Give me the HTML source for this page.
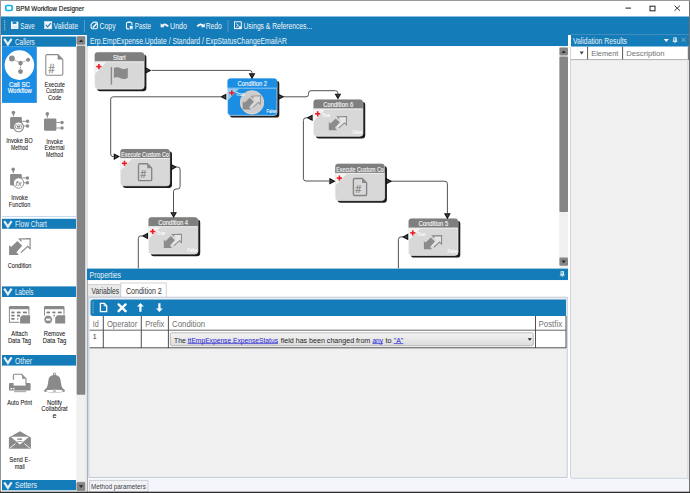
<!DOCTYPE html>
<html><head><meta charset="utf-8">
<style>
*{margin:0;padding:0}
html,body{width:690px;height:493px;overflow:hidden;background:#fff}
svg{position:absolute;left:0;top:0;display:block}
text{font-family:"Liberation Sans",sans-serif;white-space:pre}
</style></head><body>
<svg width="690" height="493" viewBox="0 0 690 493">
<rect x="0" y="0" width="690" height="493" fill="#ffffff" />
<rect x="0" y="0" width="690" height="1" fill="#8a8a8a" />
<rect x="5.75" y="5.5" width="6.5" height="5" rx="1.5" fill="none" stroke="#0cb4ee" stroke-width="1.7"/>
<text x="16" y="10.9" font-size="7.2" fill="#111111" text-anchor="start" font-weight="normal" textLength="68" lengthAdjust="spacingAndGlyphs"  stroke="#111111" stroke-width="0.14">BPM Workflow Designer</text>
<rect x="625.5" y="7.6" width="5.5" height="1" fill="#222" />
<rect x="650" y="6.2" width="5" height="4.6" fill="none" stroke="#222" stroke-width="1"/>
<path d="M674.5 5.6 L680 10.8 M680 5.6 L674.5 10.8" fill="none" stroke="#222" stroke-width="0.9" />
<rect x="1" y="16.5" width="688" height="18.5" fill="#147cb8" />
<rect x="4.2" y="20.2" width="1" height="1" fill="#bcd3e6" />
<rect x="4.2" y="22.0" width="1" height="1" fill="#bcd3e6" />
<rect x="4.2" y="23.8" width="1" height="1" fill="#bcd3e6" />
<rect x="4.2" y="25.6" width="1" height="1" fill="#bcd3e6" />
<rect x="4.2" y="27.4" width="1" height="1" fill="#bcd3e6" />
<rect x="4.2" y="29.2" width="1" height="1" fill="#bcd3e6" />
<rect x="11" y="21.6" width="7.4" height="7.4" fill="#f2f6fa" />
<rect x="12.7" y="21.6" width="3.7" height="2.3" fill="#147cb8" />
<rect x="12.4" y="25.6" width="4.6" height="2.8" fill="#dbe6ef" />
<text x="20.3" y="28.8" font-size="8.4" fill="#f2f6fa" text-anchor="start" font-weight="normal" textLength="14.5" lengthAdjust="spacingAndGlyphs" >Save</text>
<rect x="44.4" y="21.4" width="7.4" height="7.4" fill="#f2f6fa" stroke="#d6e3ee" stroke-width="0.6"/>
<path d="M45.7 24.9 l1.9 2 l3.2 -3.8" fill="none" stroke="#147cb8" stroke-width="1.1" />
<text x="53.6" y="28.8" font-size="8.4" fill="#f2f6fa" text-anchor="start" font-weight="normal" textLength="24.4" lengthAdjust="spacingAndGlyphs" >Validate</text>
<rect x="84" y="20" width="0.9" height="12" fill="#5f9ccb" />
<path d="M93.4 22.1 H96.2 a1.2 1.2 0 0 1 1.2 1.2 V27.6 a1.2 1.2 0 0 1 -1.2 1.2 H92.3 a1.2 1.2 0 0 1 -1.2 -1.2 V24.4 z" fill="none" stroke="#f2f6fa" stroke-width="1.1" />
<path d="M93 27.6 L96.6 23.6" fill="none" stroke="#f2f6fa" stroke-width="1.5" />
<path d="M92.4 28.2 L93.4 26.6 L94 27.4 z" fill="#f2f6fa" stroke="none" stroke-width="1" />
<text x="99.5" y="28.8" font-size="8.4" fill="#f2f6fa" text-anchor="start" font-weight="normal" textLength="16.1" lengthAdjust="spacingAndGlyphs" >Copy</text>
<rect x="126.5" y="22.3" width="5.4" height="6.6" rx="1" fill="none" stroke="#f2f6fa" stroke-width="1.1"/>
<rect x="127.6" y="21.6" width="3.2" height="1.2" fill="#f2f6fa" />
<rect x="129.3" y="25.4" width="3.8" height="3.8" fill="#f2f6fa" stroke="#147cb8" stroke-width="0.7"/>
<text x="134.8" y="28.8" font-size="8.4" fill="#f2f6fa" text-anchor="start" font-weight="normal" textLength="16.2" lengthAdjust="spacingAndGlyphs" >Paste</text>
<path d="M162 25.8 q2.8 -3 6.2 0.6" fill="none" stroke="#f2f6fa" stroke-width="1.9" />
<path d="M160.6 23.2 v4 h4 z" fill="#f2f6fa" stroke="none" stroke-width="1" />
<text x="170" y="28.8" font-size="8.4" fill="#f2f6fa" text-anchor="start" font-weight="normal" textLength="17" lengthAdjust="spacingAndGlyphs" >Undo</text>
<path d="M203.4 25.8 q-2.8 -3 -6.2 0.6" fill="none" stroke="#f2f6fa" stroke-width="1.9" />
<path d="M204.8 23.2 v4 h-4 z" fill="#f2f6fa" stroke="none" stroke-width="1" />
<text x="205.7" y="28.8" font-size="8.4" fill="#f2f6fa" text-anchor="start" font-weight="normal" textLength="16" lengthAdjust="spacingAndGlyphs" >Redo</text>
<rect x="227.6" y="20" width="0.9" height="12" fill="#5f9ccb" />
<rect x="234.5" y="21.8" width="6.8" height="6.8" fill="none" stroke="#f2f6fa" stroke-width="1"/>
<path d="M236.3 23.8 l2.2 1.6 l-2.2 1.6" fill="none" stroke="#f2f6fa" stroke-width="1" />
<rect x="238.8" y="26.4" width="2.4" height="2.2" fill="#f2f6fa" />
<text x="243.5" y="28.8" font-size="8.4" fill="#f2f6fa" text-anchor="start" font-weight="normal" textLength="68.5" lengthAdjust="spacingAndGlyphs" >Usings &amp; References...</text>
<rect x="1" y="35" width="86" height="457" fill="#ffffff" />
<rect x="76.3" y="36" width="9.2" height="455.5" fill="#f0f0f0" />
<rect x="76.8" y="36.6" width="8.6" height="8" rx="1" fill="#858585" stroke="#7a7a7a" stroke-width="0.5"/>
<path d="M78.9 42 L81.1 39.5 L83.3 42 z" fill="#2a2a2a" stroke="none" stroke-width="1" />
<rect x="76.7" y="45.8" width="8.6" height="349" rx="1" fill="#858585"/>
<rect x="84.5" y="46.5" width="0.8" height="347.6" fill="#7a7a7a" />
<rect x="76.8" y="482.2" width="8.6" height="8.5" rx="1" fill="#858585" stroke="#7a7a7a" stroke-width="0.5"/>
<path d="M78.9 485.2 L81.1 487.9 L83.3 485.2 z" fill="#2a2a2a" stroke="none" stroke-width="1" />
<rect x="85.3" y="35" width="2.7" height="457" fill="#e2e5e9" />
<rect x="2" y="36.5" width="74" height="10.200000000000003" fill="#147cb8" />
<path d="M4.2 38.8 L7.9 44.4 L11.6 38.8" fill="none" stroke="#e4eef6" stroke-width="2.2" />
<text x="15" y="44.6" font-size="8.7" fill="#eaf2f8" text-anchor="start" font-weight="normal" textLength="19.8" lengthAdjust="spacingAndGlyphs" >Callers</text>
<rect x="2" y="218.8" width="74" height="10.0" fill="#147cb8" />
<path d="M4.2 221.10000000000002 L7.9 226.70000000000002 L11.6 221.10000000000002" fill="none" stroke="#e4eef6" stroke-width="2.2" />
<text x="15" y="226.70000000000002" font-size="8.7" fill="#eaf2f8" text-anchor="start" font-weight="normal" textLength="31.9" lengthAdjust="spacingAndGlyphs" >Flow Chart</text>
<rect x="2" y="216" width="74" height="0.8" fill="#b9d3ea" />
<rect x="2" y="286.4" width="74" height="10.600000000000023" fill="#147cb8" />
<path d="M4.2 288.7 L7.9 294.29999999999995 L11.6 288.7" fill="none" stroke="#e4eef6" stroke-width="2.2" />
<text x="15" y="294.9" font-size="8.7" fill="#eaf2f8" text-anchor="start" font-weight="normal" textLength="18.4" lengthAdjust="spacingAndGlyphs" >Labels</text>
<rect x="2" y="355" width="74" height="10.600000000000023" fill="#147cb8" />
<path d="M4.2 357.3 L7.9 362.9 L11.6 357.3" fill="none" stroke="#e4eef6" stroke-width="2.2" />
<text x="15" y="363.5" font-size="8.7" fill="#eaf2f8" text-anchor="start" font-weight="normal" textLength="17" lengthAdjust="spacingAndGlyphs" >Other</text>
<rect x="2" y="480" width="74" height="10.300000000000011" fill="#147cb8" />
<path d="M4.2 482.3 L7.9 487.9 L11.6 482.3" fill="none" stroke="#e4eef6" stroke-width="2.2" />
<text x="15" y="488.2" font-size="8.7" fill="#eaf2f8" text-anchor="start" font-weight="normal" textLength="22" lengthAdjust="spacingAndGlyphs" >Setters</text>
<rect x="2" y="46.7" width="34.8" height="56.2" fill="#1b8de2" />
<circle cx="19.4" cy="65.1" r="14.8" fill="#ffffff" stroke="none" stroke-width="1"/>
<path d="M11.9 58.5 L20.5 63.1 L28.1 59.8 M20.5 63.1 L20.5 71.6" fill="none" stroke="#8a8a8a" stroke-width="0.9" stroke-dasharray="1.2 0.8"/>
<circle cx="11.9" cy="58.5" r="2.9" fill="#8a8a8a" stroke="none" stroke-width="1"/>
<circle cx="28.1" cy="59.8" r="2" fill="#8a8a8a" stroke="none" stroke-width="1"/>
<circle cx="20.5" cy="63.1" r="2.3" fill="#8a8a8a" stroke="none" stroke-width="1"/>
<circle cx="20.5" cy="71.6" r="2.4" fill="#8a8a8a" stroke="none" stroke-width="1"/>
<text x="19.5" y="86.6" font-size="7.0" fill="#ffffff" text-anchor="middle" font-weight="normal" textLength="21" lengthAdjust="spacingAndGlyphs"  stroke="#ffffff" stroke-width="0.15">Call SC</text>
<text x="19.7" y="92.9" font-size="7.0" fill="#ffffff" text-anchor="middle" font-weight="normal" textLength="24" lengthAdjust="spacingAndGlyphs"  stroke="#ffffff" stroke-width="0.15">Workflow</text>
<path d="M47 54.6 h11 l4.8 4.8 v14.6 a1.2 1.2 0 0 1 -1.2 1.2 h-14.6 a1.2 1.2 0 0 1 -1.2 -1.2 v-18.2 a1.2 1.2 0 0 1 1.2 -1.2 z" fill="none" stroke="#8a8a8a" stroke-width="1.1" />
<path d="M57.6 54.6 v4.8 h5.2 z" fill="#8a8a8a" stroke="none" stroke-width="1" />
<text x="51.6" y="72.6" font-size="13.2" fill="#8a8a8a" text-anchor="middle" font-weight="normal" textLength="6" lengthAdjust="spacingAndGlyphs"  stroke="#8a8a8a" stroke-width="0.3">#</text>
<text x="54.7" y="86.5" font-size="7.2" fill="#111111" text-anchor="middle" font-weight="normal" textLength="20.5" lengthAdjust="spacingAndGlyphs"  stroke="#111111" stroke-width="0.06">Execute</text>
<text x="54.7" y="93.0" font-size="7.2" fill="#111111" text-anchor="middle" font-weight="normal" textLength="17.5" lengthAdjust="spacingAndGlyphs"  stroke="#111111" stroke-width="0.06">Custom</text>
<text x="54.7" y="99.5" font-size="7.2" fill="#111111" text-anchor="middle" font-weight="normal" textLength="13.5" lengthAdjust="spacingAndGlyphs"  stroke="#111111" stroke-width="0.06">Code</text>
<circle cx="13.4" cy="112.5" r="1.8" fill="#8a8a8a" stroke="none" stroke-width="1"/>
<path d="M12.3 113.5 L13.4 117.1 L14.5 113.5 z" fill="#8a8a8a" stroke="none" stroke-width="1" />
<rect x="10.1" y="117.1" width="11.8" height="11.8" rx="1.3" fill="#8a8a8a"/>
<line x1="21.9" y1="121.3" x2="26.099999999999998" y2="121.3" stroke="#8a8a8a" stroke-width="0.9" />
<circle cx="27.5" cy="121.3" r="1.75" fill="#8a8a8a" stroke="none" stroke-width="1"/>
<line x1="21.9" y1="126" x2="26.099999999999998" y2="126" stroke="#8a8a8a" stroke-width="0.9" />
<circle cx="27.5" cy="126" r="1.75" fill="#8a8a8a" stroke="none" stroke-width="1"/>
<circle cx="18.6" cy="126.8" r="4.9" fill="#ffffff" stroke="#8a8a8a" stroke-width="1.1"/>
<rect x="15.6" y="125" width="6" height="3.6" rx="0.8" fill="#ffffff" stroke="#8a8a8a" stroke-width="0.8"/>
<rect x="17" y="126.3" width="3.2" height="1.1" fill="#555" />
<text x="19.4" y="143.2" font-size="7.2" fill="#111111" text-anchor="middle" font-weight="normal" textLength="26.5" lengthAdjust="spacingAndGlyphs"  stroke="#111111" stroke-width="0.06">Invoke BO</text>
<text x="19.4" y="149.7" font-size="7.2" fill="#111111" text-anchor="middle" font-weight="normal" textLength="17" lengthAdjust="spacingAndGlyphs"  stroke="#111111" stroke-width="0.06">Method</text>
<circle cx="47.3" cy="113.80000000000001" r="1.8" fill="#8a8a8a" stroke="none" stroke-width="1"/>
<path d="M46.199999999999996 114.80000000000001 L47.3 118.4 L48.4 114.80000000000001 z" fill="#8a8a8a" stroke="none" stroke-width="1" />
<rect x="44" y="118.4" width="12.4" height="12.4" rx="1.3" fill="#8a8a8a"/>
<line x1="56.4" y1="122.5" x2="60.6" y2="122.5" stroke="#8a8a8a" stroke-width="0.9" />
<circle cx="62.0" cy="122.5" r="1.75" fill="#8a8a8a" stroke="none" stroke-width="1"/>
<line x1="56.4" y1="128" x2="60.6" y2="128" stroke="#8a8a8a" stroke-width="0.9" />
<circle cx="62.0" cy="128" r="1.75" fill="#8a8a8a" stroke="none" stroke-width="1"/>
<text x="54.5" y="143.7" font-size="7.2" fill="#111111" text-anchor="middle" font-weight="normal" textLength="16.5" lengthAdjust="spacingAndGlyphs"  stroke="#111111" stroke-width="0.06">Invoke</text>
<text x="54.5" y="150.2" font-size="7.2" fill="#111111" text-anchor="middle" font-weight="normal" textLength="20" lengthAdjust="spacingAndGlyphs"  stroke="#111111" stroke-width="0.06">External</text>
<text x="54.5" y="156.7" font-size="7.2" fill="#111111" text-anchor="middle" font-weight="normal" textLength="17" lengthAdjust="spacingAndGlyphs"  stroke="#111111" stroke-width="0.06">Method</text>
<circle cx="13.2" cy="169.3" r="1.8" fill="#8a8a8a" stroke="none" stroke-width="1"/>
<path d="M12.1 170.3 L13.2 173.9 L14.299999999999999 170.3 z" fill="#8a8a8a" stroke="none" stroke-width="1" />
<rect x="10.1" y="173.9" width="11.7" height="11.7" rx="1.3" fill="#8a8a8a"/>
<line x1="21.799999999999997" y1="177.9" x2="25.999999999999996" y2="177.9" stroke="#8a8a8a" stroke-width="0.9" />
<circle cx="27.4" cy="177.9" r="1.75" fill="#8a8a8a" stroke="none" stroke-width="1"/>
<line x1="21.799999999999997" y1="182.8" x2="25.999999999999996" y2="182.8" stroke="#8a8a8a" stroke-width="0.9" />
<circle cx="27.4" cy="182.8" r="1.75" fill="#8a8a8a" stroke="none" stroke-width="1"/>
<circle cx="18.6" cy="183" r="5.2" fill="#ffffff" stroke="#8a8a8a" stroke-width="0.9"/>
<text x="18.8" y="185.6" font-size="7.8" fill="#777" text-anchor="middle" font-weight="normal" textLength="6.4" lengthAdjust="spacingAndGlyphs" font-style="italic">fx</text>
<text x="19.5" y="200.2" font-size="7.2" fill="#111111" text-anchor="middle" font-weight="normal" textLength="16.5" lengthAdjust="spacingAndGlyphs"  stroke="#111111" stroke-width="0.06">Invoke</text>
<text x="19.5" y="206.7" font-size="7.2" fill="#111111" text-anchor="middle" font-weight="normal" textLength="21.5" lengthAdjust="spacingAndGlyphs"  stroke="#111111" stroke-width="0.06">Function</text>
<g transform="translate(9.1,238) scale(1.0)"><path d="M12.4 3.2 L10.4 0.8 L21 0.8 L21 10.4 L18.6 8.4 L11.8 14.6 L9.0 12.4 L14.6 6.8 Z" fill="#ffffff"/><path d="M0 17 L0 7.1 L1.9 9 L8.3 3 L13.1 7.8 L7.3 14.2 L9.8 17 Z" fill="#8a8a8a"/><path d="M12.4 3.4 L10.2 1.0 L21.1 0.7 L21 10.6 L18.6 8.4 L11.8 14.6" fill="none" stroke="#8a8a8a" stroke-width="1.15"/></g>
<text x="19.6" y="267.5" font-size="7.2" fill="#111111" text-anchor="middle" font-weight="normal" textLength="23.7" lengthAdjust="spacingAndGlyphs"  stroke="#111111" stroke-width="0.06">Condition</text>
<path d="M8.9 309.3 V307.3 a1.3 1.3 0 0 1 1.3 -1.3 H28.1 a1.3 1.3 0 0 1 1.3 1.3 V309.3 z" fill="#8a8a8a" stroke="none" stroke-width="1" />
<line x1="28.9" y1="309" x2="28.9" y2="314.5" stroke="#8a8a8a" stroke-width="1" />
<line x1="9.4" y1="309" x2="9.4" y2="322.3" stroke="#8a8a8a" stroke-width="1" />
<line x1="8.9" y1="322.3" x2="19.5" y2="322.3" stroke="#8a8a8a" stroke-width="1" />
<rect x="11.3" y="311.6" width="3.1999999999999997" height="1.7" fill="#7a7a7a" />
<rect x="16.9" y="311.6" width="3.6999999999999993" height="1.7" fill="#7a7a7a" />
<rect x="23.0" y="311.6" width="3.799999999999999" height="1.7" fill="#7a7a7a" />
<rect x="11.3" y="314.8" width="3.1999999999999997" height="1.7" fill="#7a7a7a" />
<rect x="17.0" y="314.8" width="3.0" height="1.7" fill="#7a7a7a" />
<rect x="11.3" y="318.0" width="3.1999999999999997" height="1.7" fill="#7a7a7a" />
<rect x="17.200000000000003" y="318.0" width="1.0" height="1.7" fill="#7a7a7a" />
<path d="M22.3 315.2 H30.1 V323.6 H20.1 V317.4 z" fill="#8a8a8a" stroke="none" stroke-width="1" />
<text x="19.5" y="336.2" font-size="7.2" fill="#111111" text-anchor="middle" font-weight="normal" textLength="16.3" lengthAdjust="spacingAndGlyphs"  stroke="#111111" stroke-width="0.06">Attach</text>
<text x="19.5" y="342.7" font-size="7.2" fill="#111111" text-anchor="middle" font-weight="normal" textLength="23.2" lengthAdjust="spacingAndGlyphs"  stroke="#111111" stroke-width="0.06">Data Tag</text>
<path d="M44 309.3 V307.3 a1.3 1.3 0 0 1 1.3 -1.3 H63.2 a1.3 1.3 0 0 1 1.3 1.3 V309.3 z" fill="#8a8a8a" stroke="none" stroke-width="1" />
<line x1="64" y1="309" x2="64" y2="314.5" stroke="#8a8a8a" stroke-width="1" />
<line x1="44.5" y1="309" x2="44.5" y2="315.5" stroke="#8a8a8a" stroke-width="1" />
<rect x="46.6" y="311.6" width="3.4" height="1.7" fill="#7a7a7a" />
<rect x="52.4" y="311.6" width="3.0" height="1.7" fill="#7a7a7a" />
<rect x="57.8" y="311.6" width="3.8999999999999986" height="1.7" fill="#7a7a7a" />
<rect x="53.5" y="314.8" width="1.3000000000000007" height="1.7" fill="#7a7a7a" />
<path d="M57.4 315.2 H65.2 V323.6 H55.2 V317.4 z" fill="#8a8a8a" stroke="none" stroke-width="1" />
<circle cx="48.2" cy="319.6" r="4.3" fill="#8a8a8a" stroke="#ffffff" stroke-width="0.8"/>
<rect x="46.1" y="318.6" width="4.4" height="2" fill="#ffffff" />
<text x="54.5" y="336.2" font-size="7.2" fill="#111111" text-anchor="middle" font-weight="normal" textLength="21.6" lengthAdjust="spacingAndGlyphs"  stroke="#111111" stroke-width="0.06">Remove</text>
<text x="54.5" y="342.7" font-size="7.2" fill="#111111" text-anchor="middle" font-weight="normal" textLength="23.4" lengthAdjust="spacingAndGlyphs"  stroke="#111111" stroke-width="0.06">Data Tag</text>
<rect x="9" y="383" width="21.6" height="7.6" rx="1.2" fill="#8a8a8a"/>
<rect x="13.6" y="376" width="12" height="9.6" fill="#ffffff" />
<path d="M13.4 379.8 V375.6 a1.3 1.3 0 0 1 1.3 -1.3 H21.6 L26 378.7 V384" fill="none" stroke="#8a8a8a" stroke-width="1.1" />
<path d="M21.6 375 L25.4 378.8 L22.6 379 z" fill="#8a8a8a" stroke="none" stroke-width="1" />
<rect x="10.5" y="388" width="1.6" height="1.3" fill="#ffffff" />
<rect x="12.9" y="388" width="1.6" height="1.3" fill="#ffffff" />
<rect x="14" y="390.6" width="12.2" height="1.6" fill="#b0b0b0" />
<text x="19.6" y="404.7" font-size="7.2" fill="#111111" text-anchor="middle" font-weight="normal" textLength="24.9" lengthAdjust="spacingAndGlyphs"  stroke="#111111" stroke-width="0.06">Auto Print</text>
<circle cx="54.5" cy="374" r="1.1" fill="#ffffff" stroke="#8a8a8a" stroke-width="0.9"/>
<path d="M54.5 375.1 C50.5 375.1 48.8 377.5 48.4 380.5 C47.8 385 47.4 387.5 45.5 389 C44.5 389.8 44 390.3 44 391 C44 393 65 393 65 391 C65 390.3 64.5 389.8 63.5 389 C61.6 387.5 61.2 385 60.6 380.5 C60.2 377.5 58.5 375.1 54.5 375.1 Z" fill="#8a8a8a" stroke="none" stroke-width="1" />
<ellipse cx="54.5" cy="391" rx="8.8" ry="1.25" fill="#ffffff"/>
<rect x="53.3" y="390.6" width="2.4" height="0.9" fill="#666" />
<text x="54.5" y="405.0" font-size="7.2" fill="#111111" text-anchor="middle" font-weight="normal" textLength="15" lengthAdjust="spacingAndGlyphs"  stroke="#111111" stroke-width="0.06">Notify</text>
<text x="54.5" y="411.3" font-size="7.2" fill="#111111" text-anchor="middle" font-weight="normal" textLength="26.3" lengthAdjust="spacingAndGlyphs"  stroke="#111111" stroke-width="0.06">Collaborat</text>
<text x="54.5" y="417.6" font-size="7.2" fill="#111111" text-anchor="middle" font-weight="normal"  stroke="#111111" stroke-width="0.06">e</text>
<path d="M8.9 437.6 L19.9 431.2 L30.9 437.6 V448.8 H8.9 z" fill="#8a8a8a" stroke="none" stroke-width="1" />
<path d="M11.6 436.7 H28.2 V437.6 L19.9 444.4 L11.6 437.6 z" fill="#ffffff" stroke="none" stroke-width="1" />
<rect x="17.3" y="438.4" width="4.8" height="1.5" fill="#8a8a8a" />
<rect x="17.3" y="441.2" width="4.8" height="0.8" fill="#8a8a8a" />
<path d="M9.8 448.3 L15.4 443.6 M30 448.3 L24.4 443.6" fill="none" stroke="#ffffff" stroke-width="0.9" />
<text x="19.8" y="462.0" font-size="7.2" fill="#111111" text-anchor="middle" font-weight="normal" textLength="21.1" lengthAdjust="spacingAndGlyphs"  stroke="#111111" stroke-width="0.06">Send E-</text>
<text x="19.8" y="468.5" font-size="7.2" fill="#111111" text-anchor="middle" font-weight="normal" textLength="10.1" lengthAdjust="spacingAndGlyphs"  stroke="#111111" stroke-width="0.06">mail</text>
<rect x="87" y="35" width="481" height="11.2" fill="#147cb8" />
<text x="90" y="43.9" font-size="8.4" fill="#eaf2f8" text-anchor="start" font-weight="normal" textLength="197" lengthAdjust="spacingAndGlyphs" >Erp.EmpExpense.Update / Standard / ExpStatusChangeEmailAR</text>
<rect x="88" y="46.2" width="480" height="222.4" fill="#ffffff" />
<rect x="559.2" y="46.2" width="9" height="222.4" fill="#f0f0f0" />
<rect x="559.4" y="47.4" width="8.6" height="8" rx="1" fill="#858585"/>
<path d="M561.5 53 L563.7 50.4 L565.9 53 z" fill="#2a2a2a" stroke="none" stroke-width="1" />
<rect x="559.4" y="56.4" width="8.6" height="155.6" rx="1" fill="#858585"/>
<rect x="559.4" y="257.6" width="8.6" height="8.2" rx="1" fill="#858585"/>
<path d="M561.5 260.6 L563.7 263.2 L565.9 260.6 z" fill="#2a2a2a" stroke="none" stroke-width="1" />
<path d="M151.6 70.4 H249.6 q2.4 0 2.4 2.4 V73.5" fill="none" stroke="#4a4a4a" stroke-width="0.95" stroke-linejoin="round"/>
<path d="M283.6 96.8 H306 q2.5 0 2.5 -2.5 V93.2 q0 -2.5 2.5 -2.5 H335.4 q2.5 0 2.5 2.5 V94" fill="none" stroke="#4a4a4a" stroke-width="0.95" stroke-linejoin="round"/>
<path d="M220.6 96.8 H113.2 q-2.5 0 -2.5 2.5 V154.1 q0 2.5 2.5 2.5 H114" fill="none" stroke="#4a4a4a" stroke-width="0.95" stroke-linejoin="round"/>
<path d="M176.4 167 H177.6 q2.5 0 2.5 2.5 V186.5 q0 2.5 -2.5 2.5 H176 q-2.5 0 -2.5 2.5 V212.4" fill="none" stroke="#4a4a4a" stroke-width="0.95" stroke-linejoin="round"/>
<path d="M142.6 235.9 H140.8 q-2.5 0 -2.5 2.5 V268.5" fill="none" stroke="#4a4a4a" stroke-width="0.95" stroke-linejoin="round"/>
<path d="M307.2 117.8 H306 q-2.6 0 -2.6 2.6 V178.5 q0 2.5 2.5 2.5 H329.4" fill="none" stroke="#4a4a4a" stroke-width="0.95" stroke-linejoin="round"/>
<path d="M391 181.2 H444.8 q2.6 0 2.6 2.6 V213.4" fill="none" stroke="#4a4a4a" stroke-width="0.95" stroke-linejoin="round"/>
<path d="M402.8 236.9 H401 q-2.6 0 -2.6 2.6 V268.5" fill="none" stroke="#4a4a4a" stroke-width="0.95" stroke-linejoin="round"/>
<rect x="97.0" y="54.5" width="49.4" height="36.8" rx="3.2" fill="#1a1a1a" filter="url(#blur)"/>
<rect x="94.7" y="52.3" width="49.4" height="36.8" rx="3" fill="#d8d8d8" stroke="#f2f2f2" stroke-width="0.7"/>
<path d="M94.7 61.4 V55.3 a3 3 0 0 1 3 -3 H141.1 a3 3 0 0 1 3 3 V61.4 z" fill="#7f7f7f"/>
<rect x="95.10000000000001" y="61.4" width="48.6" height="0.9" fill="#f0f0f0" />
<text x="119.4" y="60.0" font-size="7.4" fill="#fafafa" text-anchor="middle" font-weight="normal" textLength="12.8" lengthAdjust="spacingAndGlyphs"  stroke="#fafafa" stroke-width="0.12">Start</text>
<path d="M95.10000000000001 62.3 H106.3 L95.10000000000001 73.9 z" fill="#f4f4f4" stroke="none" stroke-width="1" />
<rect x="96.3" y="65.8" width="5.2" height="1.6" fill="#ee1c24" />
<rect x="98.10000000000001" y="64.0" width="1.6" height="5.2" fill="#ee1c24" />
<rect x="110.7" y="67.0" width="1.4" height="17.6" fill="#8a8a8a" />
<path d="M113.9 67.8 C117.0 66.5 119.5 67.5 121.5 68.6 C123.5 69.6 126.0 69.0 127.80000000000001 67.8 V77.8 C126.0 79.0 123.5 79.6 121.5 78.6 C119.5 77.5 117.0 76.5 113.9 77.8 Z" fill="#8a8a8a" stroke="none" stroke-width="1" />
<rect x="229.9" y="80.8" width="49.4" height="36.8" rx="3.2" fill="#1a1a1a" filter="url(#blur)"/>
<rect x="227.6" y="78.6" width="49.4" height="36.8" rx="3" fill="#1b8de2" stroke="#cfe6f8" stroke-width="0.7"/>
<path d="M227.6 87.69999999999999 V81.6 a3 3 0 0 1 3 -3 H274.0 a3 3 0 0 1 3 3 V87.69999999999999 z" fill="#1b8de2"/>
<rect x="228.0" y="87.69999999999999" width="48.6" height="0.9" fill="#9fd0f4" />
<text x="252.29999999999998" y="86.3" font-size="7.4" fill="#fafafa" text-anchor="middle" font-weight="normal" textLength="29.5" lengthAdjust="spacingAndGlyphs"  stroke="#fafafa" stroke-width="0.12">Condition 2</text>
<path d="M228.0 88.6 H239.2 L228.0 100.19999999999999 z" fill="#8fcdf3" stroke="none" stroke-width="1" />
<rect x="229.2" y="92.1" width="5.2" height="1.6" fill="#ee1c24" />
<rect x="231.0" y="90.3" width="1.6" height="5.2" fill="#ee1c24" />
<circle cx="252.0" cy="102.39999999999999" r="11.7" fill="#cdcdcd" stroke="#f0d8c8" stroke-width="0.8"/>
<g transform="translate(242.79999999999998,95.3) scale(0.84)"><path d="M12.4 3.2 L10.4 0.8 L21 0.8 L21 10.4 L18.6 8.4 L11.8 14.6 L9.0 12.4 L14.6 6.8 Z" fill="#dadada"/><path d="M0 17 L0 7.1 L1.9 9 L8.3 3 L13.1 7.8 L7.3 14.2 L9.8 17 Z" fill="#8c8c8c"/><path d="M12.4 3.4 L10.2 1.0 L21.1 0.7 L21 10.6 L18.6 8.4 L11.8 14.6" fill="none" stroke="#9a9a9a" stroke-width="1.3"/></g>
<text x="235.79999999999998" y="96.19999999999999" font-size="5.4" fill="#ffffff" text-anchor="start" font-weight="normal" textLength="8.4" lengthAdjust="spacingAndGlyphs"  stroke="#ffffff" stroke-width="0.1">True</text>
<text x="276.4" y="113.39999999999999" font-size="5.4" fill="#ffffff" text-anchor="end" font-weight="normal" textLength="9.8" lengthAdjust="spacingAndGlyphs"  stroke="#ffffff" stroke-width="0.1">False</text>
<rect x="315.8" y="101.7" width="49.4" height="36.8" rx="3.2" fill="#1a1a1a" filter="url(#blur)"/>
<rect x="313.5" y="99.5" width="49.4" height="36.8" rx="3" fill="#d8d8d8" stroke="#f2f2f2" stroke-width="0.7"/>
<path d="M313.5 108.6 V102.5 a3 3 0 0 1 3 -3 H359.9 a3 3 0 0 1 3 3 V108.6 z" fill="#7f7f7f"/>
<rect x="313.9" y="108.6" width="48.6" height="0.9" fill="#f0f0f0" />
<text x="338.2" y="107.2" font-size="7.4" fill="#fafafa" text-anchor="middle" font-weight="normal" textLength="30" lengthAdjust="spacingAndGlyphs"  stroke="#fafafa" stroke-width="0.12">Condition 6</text>
<path d="M313.9 109.5 H325.1 L313.9 121.1 z" fill="#f4f4f4" stroke="none" stroke-width="1" />
<rect x="315.1" y="113.0" width="5.2" height="1.6" fill="#ee1c24" />
<rect x="316.9" y="111.2" width="1.6" height="5.2" fill="#ee1c24" />
<g transform="translate(328.8,115.9) scale(0.84)"><path d="M12.4 3.2 L10.4 0.8 L21 0.8 L21 10.4 L18.6 8.4 L11.8 14.6 L9.0 12.4 L14.6 6.8 Z" fill="#e6e6e6"/><path d="M0 17 L0 7.1 L1.9 9 L8.3 3 L13.1 7.8 L7.3 14.2 L9.8 17 Z" fill="#8c8c8c"/><path d="M12.4 3.4 L10.2 1.0 L21.1 0.7 L21 10.6 L18.6 8.4 L11.8 14.6" fill="none" stroke="#8c8c8c" stroke-width="1.3"/></g>
<text x="321.7" y="117.1" font-size="5.4" fill="#ffffff" text-anchor="start" font-weight="normal" textLength="8.4" lengthAdjust="spacingAndGlyphs"  stroke="#ffffff" stroke-width="0.1">True</text>
<text x="362.29999999999995" y="134.3" font-size="5.4" fill="#ffffff" text-anchor="end" font-weight="normal" textLength="9.8" lengthAdjust="spacingAndGlyphs"  stroke="#ffffff" stroke-width="0.1">False</text>
<rect x="122.6" y="151.2" width="49.4" height="36.8" rx="3.2" fill="#1a1a1a" filter="url(#blur)"/>
<rect x="120.3" y="149" width="49.4" height="36.8" rx="3" fill="#d8d8d8" stroke="#f2f2f2" stroke-width="0.7"/>
<path d="M120.3 158.1 V152 a3 3 0 0 1 3 -3 H166.7 a3 3 0 0 1 3 3 V158.1 z" fill="#7f7f7f"/>
<rect x="120.7" y="158.1" width="48.6" height="0.9" fill="#f0f0f0" />
<clipPath id="ce1"><rect x="120.3" y="149" width="48.9" height="9"/></clipPath>
<text x="121.3" y="156.7" font-size="7.4" fill="#fafafa" text-anchor="start" font-weight="normal" textLength="53.5" lengthAdjust="spacingAndGlyphs" clip-path="url(#ce1)" stroke="#fafafa" stroke-width="0.12">Execute Custom Code</text>
<path d="M120.7 159 H131.9 L120.7 170.6 z" fill="#f4f4f4" stroke="none" stroke-width="1" />
<rect x="121.89999999999999" y="162.5" width="5.2" height="1.6" fill="#ee1c24" />
<rect x="123.7" y="160.7" width="1.6" height="5.2" fill="#ee1c24" />
<path d="M139.7 163.7 h7.6 l4.4 4.4 v11.4 a1.2 1.2 0 0 1 -1.2 1.2 h-10.8 a1.2 1.2 0 0 1 -1.2 -1.2 v-14.6 a1.2 1.2 0 0 1 1.2 -1.2 z" fill="#d8d8d8" stroke="#848484" stroke-width="1.35" />
<path d="M147.1 163.7 v4.6 h4.6 z" fill="#8c8c8c" stroke="none" stroke-width="1" />
<text x="143.4" y="178.29999999999998" font-size="11.2" fill="#808080" text-anchor="middle" font-weight="normal" textLength="5.6" lengthAdjust="spacingAndGlyphs"  stroke="#808080" stroke-width="0.2">#</text>
<rect x="150.8" y="219.39999999999998" width="49.4" height="36.8" rx="3.2" fill="#1a1a1a" filter="url(#blur)"/>
<rect x="148.5" y="217.2" width="49.4" height="36.8" rx="3" fill="#d8d8d8" stroke="#f2f2f2" stroke-width="0.7"/>
<path d="M148.5 226.29999999999998 V220.2 a3 3 0 0 1 3 -3 H194.9 a3 3 0 0 1 3 3 V226.29999999999998 z" fill="#7f7f7f"/>
<rect x="148.9" y="226.29999999999998" width="48.6" height="0.9" fill="#f0f0f0" />
<text x="173.2" y="224.89999999999998" font-size="7.4" fill="#fafafa" text-anchor="middle" font-weight="normal" textLength="29.8" lengthAdjust="spacingAndGlyphs"  stroke="#fafafa" stroke-width="0.12">Condition 4</text>
<path d="M148.9 227.2 H160.1 L148.9 238.79999999999998 z" fill="#f4f4f4" stroke="none" stroke-width="1" />
<rect x="150.1" y="230.7" width="5.2" height="1.6" fill="#ee1c24" />
<rect x="151.9" y="228.89999999999998" width="1.6" height="5.2" fill="#ee1c24" />
<g transform="translate(163.8,233.6) scale(0.84)"><path d="M12.4 3.2 L10.4 0.8 L21 0.8 L21 10.4 L18.6 8.4 L11.8 14.6 L9.0 12.4 L14.6 6.8 Z" fill="#e6e6e6"/><path d="M0 17 L0 7.1 L1.9 9 L8.3 3 L13.1 7.8 L7.3 14.2 L9.8 17 Z" fill="#8c8c8c"/><path d="M12.4 3.4 L10.2 1.0 L21.1 0.7 L21 10.6 L18.6 8.4 L11.8 14.6" fill="none" stroke="#8c8c8c" stroke-width="1.3"/></g>
<text x="156.7" y="234.79999999999998" font-size="5.4" fill="#ffffff" text-anchor="start" font-weight="normal" textLength="8.4" lengthAdjust="spacingAndGlyphs"  stroke="#ffffff" stroke-width="0.1">True</text>
<text x="197.3" y="252.0" font-size="5.4" fill="#ffffff" text-anchor="end" font-weight="normal" textLength="9.8" lengthAdjust="spacingAndGlyphs"  stroke="#ffffff" stroke-width="0.1">False</text>
<rect x="337.5" y="166.0" width="49.4" height="36.8" rx="3.2" fill="#1a1a1a" filter="url(#blur)"/>
<rect x="335.2" y="163.8" width="49.4" height="36.8" rx="3" fill="#d8d8d8" stroke="#f2f2f2" stroke-width="0.7"/>
<path d="M335.2 172.9 V166.8 a3 3 0 0 1 3 -3 H381.59999999999997 a3 3 0 0 1 3 3 V172.9 z" fill="#7f7f7f"/>
<rect x="335.59999999999997" y="172.9" width="48.6" height="0.9" fill="#f0f0f0" />
<clipPath id="ce2"><rect x="335.2" y="163.8" width="48.9" height="9"/></clipPath>
<text x="336.2" y="171.5" font-size="7.4" fill="#fafafa" text-anchor="start" font-weight="normal" textLength="53.5" lengthAdjust="spacingAndGlyphs" clip-path="url(#ce2)" stroke="#fafafa" stroke-width="0.12">Execute Custom Code</text>
<path d="M335.59999999999997 173.8 H346.8 L335.59999999999997 185.4 z" fill="#f4f4f4" stroke="none" stroke-width="1" />
<rect x="336.8" y="177.3" width="5.2" height="1.6" fill="#ee1c24" />
<rect x="338.59999999999997" y="175.5" width="1.6" height="5.2" fill="#ee1c24" />
<path d="M354.59999999999997 178.5 h7.6 l4.4 4.4 v11.4 a1.2 1.2 0 0 1 -1.2 1.2 h-10.8 a1.2 1.2 0 0 1 -1.2 -1.2 v-14.6 a1.2 1.2 0 0 1 1.2 -1.2 z" fill="#d8d8d8" stroke="#848484" stroke-width="1.35" />
<path d="M362.0 178.5 v4.6 h4.6 z" fill="#8c8c8c" stroke="none" stroke-width="1" />
<text x="358.29999999999995" y="193.1" font-size="11.2" fill="#808080" text-anchor="middle" font-weight="normal" textLength="5.6" lengthAdjust="spacingAndGlyphs"  stroke="#808080" stroke-width="0.2">#</text>
<rect x="410.90000000000003" y="220.79999999999998" width="49.4" height="36.8" rx="3.2" fill="#1a1a1a" filter="url(#blur)"/>
<rect x="408.6" y="218.6" width="49.4" height="36.8" rx="3" fill="#d8d8d8" stroke="#f2f2f2" stroke-width="0.7"/>
<path d="M408.6 227.7 V221.6 a3 3 0 0 1 3 -3 H455.0 a3 3 0 0 1 3 3 V227.7 z" fill="#7f7f7f"/>
<rect x="409.0" y="227.7" width="48.6" height="0.9" fill="#f0f0f0" />
<text x="433.3" y="226.29999999999998" font-size="7.4" fill="#fafafa" text-anchor="middle" font-weight="normal" textLength="29.8" lengthAdjust="spacingAndGlyphs"  stroke="#fafafa" stroke-width="0.12">Condition 5</text>
<path d="M409.0 228.6 H420.20000000000005 L409.0 240.2 z" fill="#f4f4f4" stroke="none" stroke-width="1" />
<rect x="410.20000000000005" y="232.1" width="5.2" height="1.6" fill="#ee1c24" />
<rect x="412.0" y="230.29999999999998" width="1.6" height="5.2" fill="#ee1c24" />
<g transform="translate(423.90000000000003,235.0) scale(0.84)"><path d="M12.4 3.2 L10.4 0.8 L21 0.8 L21 10.4 L18.6 8.4 L11.8 14.6 L9.0 12.4 L14.6 6.8 Z" fill="#e6e6e6"/><path d="M0 17 L0 7.1 L1.9 9 L8.3 3 L13.1 7.8 L7.3 14.2 L9.8 17 Z" fill="#8c8c8c"/><path d="M12.4 3.4 L10.2 1.0 L21.1 0.7 L21 10.6 L18.6 8.4 L11.8 14.6" fill="none" stroke="#8c8c8c" stroke-width="1.3"/></g>
<text x="416.8" y="236.2" font-size="5.4" fill="#ffffff" text-anchor="start" font-weight="normal" textLength="8.4" lengthAdjust="spacingAndGlyphs"  stroke="#ffffff" stroke-width="0.1">True</text>
<text x="457.4" y="253.39999999999998" font-size="5.4" fill="#ffffff" text-anchor="end" font-weight="normal" textLength="9.8" lengthAdjust="spacingAndGlyphs"  stroke="#ffffff" stroke-width="0.1">False</text>
<path d="M145.8 68.0 L150.3 70.4 L145.8 72.80000000000001 z" fill="#444444" stroke="#111111" stroke-width="1.1" stroke-linejoin="miter"/>
<path d="M249.6 73.9 L252 78.10000000000001 L254.4 73.9 z" fill="#444444" stroke="#111111" stroke-width="1.1" stroke-linejoin="miter"/>
<path d="M225.8 94.39999999999999 L221.3 96.8 L225.8 99.2 z" fill="#444444" stroke="#111111" stroke-width="1.1" stroke-linejoin="miter"/>
<path d="M278.7 94.39999999999999 L283.2 96.8 L278.7 99.2 z" fill="#444444" stroke="#111111" stroke-width="1.1" stroke-linejoin="miter"/>
<path d="M335.5 94.3 L337.9 98.5 L340.29999999999995 94.3 z" fill="#444444" stroke="#111111" stroke-width="1.1" stroke-linejoin="miter"/>
<path d="M312.09999999999997 115.39999999999999 L307.59999999999997 117.8 L312.09999999999997 120.2 z" fill="#444444" stroke="#111111" stroke-width="1.1" stroke-linejoin="miter"/>
<path d="M114.3 154.2 L118.8 156.6 L114.3 159.0 z" fill="#444444" stroke="#111111" stroke-width="1.1" stroke-linejoin="miter"/>
<path d="M171.4 164.7 L175.9 167.1 L171.4 169.5 z" fill="#444444" stroke="#111111" stroke-width="1.1" stroke-linejoin="miter"/>
<path d="M171.2 212.7 L173.6 216.89999999999998 L176.0 212.7 z" fill="#444444" stroke="#111111" stroke-width="1.1" stroke-linejoin="miter"/>
<path d="M147.5 233.5 L143.0 235.9 L147.5 238.3 z" fill="#444444" stroke="#111111" stroke-width="1.1" stroke-linejoin="miter"/>
<path d="M329.9 178.79999999999998 L334.4 181.2 L329.9 183.6 z" fill="#444444" stroke="#111111" stroke-width="1.1" stroke-linejoin="miter"/>
<path d="M386.5 178.79999999999998 L391 181.2 L386.5 183.6 z" fill="#444444" stroke="#111111" stroke-width="1.1" stroke-linejoin="miter"/>
<path d="M445.0 213.9 L447.4 218.1 L449.79999999999995 213.9 z" fill="#444444" stroke="#111111" stroke-width="1.1" stroke-linejoin="miter"/>
<path d="M407.7 234.5 L403.2 236.9 L407.7 239.3 z" fill="#444444" stroke="#111111" stroke-width="1.1" stroke-linejoin="miter"/>
<rect x="568" y="35" width="3" height="443" fill="#ffffff" />
<rect x="570.2" y="47" width="1.4" height="431" fill="#c4ccd8" />
<rect x="571" y="34.6" width="118" height="0.9" fill="#8aa9c4" />
<rect x="571" y="35" width="118" height="11.7" fill="#147cb8" />
<text x="573" y="44.4" font-size="8.4" fill="#eaf2f8" text-anchor="start" font-weight="normal" textLength="54" lengthAdjust="spacingAndGlyphs" >Validation Results</text>
<path d="M663.8 38.9 h5 l-2.5 3 z" fill="#ffffff" stroke="none" stroke-width="1" />
<rect x="673.4" y="37.4" width="3.2" height="3.8" fill="#ffffff" />
<rect x="674.3" y="37.9" width="1.0" height="3.0" fill="#147cb8" />
<rect x="672.6" y="40.8" width="4.8" height="0.9" fill="#ffffff" />
<rect x="674.6" y="41.6" width="0.8" height="1.6" fill="#ffffff" />
<path d="M681.5 37.7 l4.2 4.2 M685.7 37.7 l-4.2 4.2" fill="none" stroke="#b8b0a0" stroke-width="0.8" />
<rect x="571" y="46.7" width="118" height="13.2" fill="#ffffff" />
<rect x="571" y="59.9" width="118" height="418" fill="#f0f0f0" />
<line x1="587.6" y1="46.7" x2="587.6" y2="59.9" stroke="#444" stroke-width="0.9" />
<line x1="622.6" y1="46.7" x2="622.6" y2="59.9" stroke="#444" stroke-width="0.9" />
<line x1="571" y1="59.6" x2="689" y2="59.6" stroke="#9a9a9a" stroke-width="0.8" />
<line x1="688.5" y1="46.7" x2="688.5" y2="59.9" stroke="#444" stroke-width="0.9" />
<path d="M579.6 51.6 h4.2 l-2.1 2.8 z" fill="#444" stroke="none" stroke-width="1" />
<text x="591.3" y="56.4" font-size="8.0" fill="#707070" text-anchor="start" font-weight="normal" textLength="27" lengthAdjust="spacingAndGlyphs" >Element</text>
<text x="626.2" y="56.4" font-size="8.0" fill="#707070" text-anchor="start" font-weight="normal" textLength="38.4" lengthAdjust="spacingAndGlyphs" >Description</text>
<rect x="571" y="477.9" width="118" height="1.1" fill="#a4aec0" />
<rect x="687.4" y="47" width="0.9" height="431" fill="#c8d4e4" />
<rect x="87" y="268.6" width="481" height="11.6" fill="#147cb8" />
<text x="89.6" y="277.7" font-size="8.6" fill="#eaf2f8" text-anchor="start" font-weight="normal" textLength="31.4" lengthAdjust="spacingAndGlyphs" >Properties</text>
<rect x="560.6" y="271.2" width="3.2" height="3.8" fill="#ffffff" />
<rect x="561.5" y="271.7" width="1.0" height="3.0" fill="#147cb8" />
<rect x="559.8" y="274.6" width="4.8" height="0.9" fill="#ffffff" />
<rect x="561.8" y="275.4" width="0.8" height="1.6" fill="#ffffff" />
<rect x="87" y="280.2" width="481" height="197.8" fill="#ffffff" />
<rect x="87.4" y="284.4" width="33.4" height="12.8" fill="#e9e9e9" stroke="#c8c8c8" stroke-width="0.8"/>
<text x="91.5" y="294" font-size="8.6" fill="#333" text-anchor="start" font-weight="normal" textLength="27.5" lengthAdjust="spacingAndGlyphs" >Variables</text>
<rect x="120.8" y="283" width="45.4" height="14.4" fill="#ffffff" stroke="#c8c8c8" stroke-width="0.8"/>
<text x="125.9" y="293.7" font-size="8.6" fill="#333" text-anchor="start" font-weight="normal" textLength="35.9" lengthAdjust="spacingAndGlyphs" >Condition 2</text>
<rect x="88.8" y="297.2" width="478.4" height="180.2" fill="#f0f0f0" stroke="#b8c6d6" stroke-width="0.9"/>
<path d="M93 299.6 H566 V316 H93 a2.5 2.5 0 0 1 -2.5 -2.5 V302.1 a2.5 2.5 0 0 1 2.5 -2.5 z" fill="#147cb8"/>
<rect x="92.6" y="301.6" width="0.9" height="0.9" fill="#bcd3e6" />
<rect x="92.6" y="303.40000000000003" width="0.9" height="0.9" fill="#bcd3e6" />
<rect x="92.6" y="305.20000000000005" width="0.9" height="0.9" fill="#bcd3e6" />
<rect x="92.6" y="307.0" width="0.9" height="0.9" fill="#bcd3e6" />
<rect x="92.6" y="308.8" width="0.9" height="0.9" fill="#bcd3e6" />
<rect x="92.6" y="310.6" width="0.9" height="0.9" fill="#bcd3e6" />
<rect x="92.6" y="312.40000000000003" width="0.9" height="0.9" fill="#bcd3e6" />
<path d="M100.4 303.4 h4 l2.3 2.3 v5.9 h-6.3 z" fill="none" stroke="#ffffff" stroke-width="1.3" />
<path d="M104.2 303.4 v2.5 h2.5" fill="none" stroke="#ffffff" stroke-width="0.9" />
<path d="M118.6 304.4 l7 6.8 M125.6 304.4 l-7 6.8" fill="none" stroke="#ffffff" stroke-width="2.4" stroke-linecap="round"/>
<path d="M140.4 303 l-3.4 3.6 h2.3 v5.2 h2.2 v-5.2 h2.3 z" fill="#ffffff" stroke="none" stroke-width="1" />
<path d="M159.4 312 l-3.4 -3.6 h2.3 v-5.2 h2.2 v5.2 h2.3 z" fill="#ffffff" stroke="none" stroke-width="1" />
<rect x="89.6" y="316" width="476.5" height="32" fill="#ffffff" />
<line x1="103.3" y1="316" x2="103.3" y2="348" stroke="#3c3c3c" stroke-width="0.9" />
<line x1="141.3" y1="316" x2="141.3" y2="348" stroke="#3c3c3c" stroke-width="0.9" />
<line x1="168.4" y1="316" x2="168.4" y2="348" stroke="#3c3c3c" stroke-width="0.9" />
<line x1="535.5" y1="316" x2="535.5" y2="348" stroke="#3c3c3c" stroke-width="0.9" />
<line x1="89.6" y1="330.2" x2="566" y2="330.2" stroke="#555" stroke-width="0.9" />
<line x1="89.6" y1="347.8" x2="566" y2="347.8" stroke="#3c3c3c" stroke-width="0.9" />
<line x1="566" y1="316" x2="566" y2="348" stroke="#3c3c3c" stroke-width="0.9" />
<text x="92.8" y="326.6" font-size="8.8" fill="#707070" text-anchor="start" font-weight="normal" textLength="6" lengthAdjust="spacingAndGlyphs" >Id</text>
<text x="106.9" y="326.6" font-size="8.8" fill="#707070" text-anchor="start" font-weight="normal" textLength="30.3" lengthAdjust="spacingAndGlyphs" >Operator</text>
<text x="145.2" y="326.6" font-size="8.8" fill="#707070" text-anchor="start" font-weight="normal" textLength="19.1" lengthAdjust="spacingAndGlyphs" >Prefix</text>
<text x="172.1" y="326.6" font-size="8.8" fill="#707070" text-anchor="start" font-weight="normal" textLength="33.1" lengthAdjust="spacingAndGlyphs" >Condition</text>
<text x="538.6" y="326.6" font-size="8.8" fill="#707070" text-anchor="start" font-weight="normal" textLength="23.5" lengthAdjust="spacingAndGlyphs" >Postfix</text>
<text x="92.8" y="339.3" font-size="7" fill="#333" text-anchor="start" font-weight="normal" >1</text>
<defs><linearGradient id="dd" x1="0" y1="0" x2="0" y2="1"><stop offset="0" stop-color="#f4f4f4"/><stop offset="1" stop-color="#dcdcdc"/></linearGradient><filter id="blur" x="-20%" y="-20%" width="140%" height="140%"><feGaussianBlur stdDeviation="0.6"/></filter></defs>
<rect x="170.3" y="332.8" width="363" height="13" rx="1.5" fill="url(#dd)" stroke="#a9a9a9" stroke-width="0.8"/>
<text x="174.1" y="342.6" font-size="7.5" fill="#262626" text-anchor="start" font-weight="normal" textLength="11.6" lengthAdjust="spacingAndGlyphs" >The</text>
<text x="187.7" y="342.6" font-size="7.5" fill="#2323d6" text-anchor="start" font-weight="normal" textLength="90.3" lengthAdjust="spacingAndGlyphs" >ttEmpExpense.ExpenseStatus</text>
<line x1="187.7" y1="343.6" x2="278" y2="343.6" stroke="#2323d6" stroke-width="0.7" />
<text x="280.7" y="342.6" font-size="7.5" fill="#262626" text-anchor="start" font-weight="normal" textLength="89.6" lengthAdjust="spacingAndGlyphs" >field has been changed from</text>
<text x="372.4" y="342.6" font-size="7.5" fill="#2323d6" text-anchor="start" font-weight="normal" textLength="10.6" lengthAdjust="spacingAndGlyphs" >any</text>
<line x1="372.4" y1="343.6" x2="383" y2="343.6" stroke="#2323d6" stroke-width="0.7" />
<text x="385.5" y="342.6" font-size="7.5" fill="#262626" text-anchor="start" font-weight="normal" textLength="6.1" lengthAdjust="spacingAndGlyphs" >to</text>
<text x="393.7" y="342.6" font-size="7.5" fill="#2323d6" text-anchor="start" font-weight="normal" textLength="9.5" lengthAdjust="spacingAndGlyphs" >"A"</text>
<line x1="393.7" y1="343.6" x2="403.2" y2="343.6" stroke="#2323d6" stroke-width="0.7" />
<path d="M527.8 338.2 h4 l-2 2.6 z" fill="#1a1a1a" stroke="none" stroke-width="1" />
<rect x="88" y="478.4" width="601" height="13.4" fill="#f4f6fb" />
<rect x="87.1" y="280" width="0.9" height="212" fill="#a9a9a9" />
<rect x="89.6" y="480.4" width="58.4" height="11.6" fill="#f2f2f4" stroke="#c4c8d0" stroke-width="0.8"/>
<text x="90.9" y="489" font-size="8.0" fill="#3a3f4a" text-anchor="start" font-weight="normal" textLength="55" lengthAdjust="spacingAndGlyphs" >Method parameters</text>
<rect x="0" y="0" width="1" height="493" fill="#979797" />
<rect x="689" y="0" width="1" height="493" fill="#707070" />
<rect x="0" y="491.7" width="690" height="1.3" fill="#2e2e2e" />
<rect x="0" y="0" width="690" height="1" fill="#9a9a9a" />
</svg>
</body></html>
